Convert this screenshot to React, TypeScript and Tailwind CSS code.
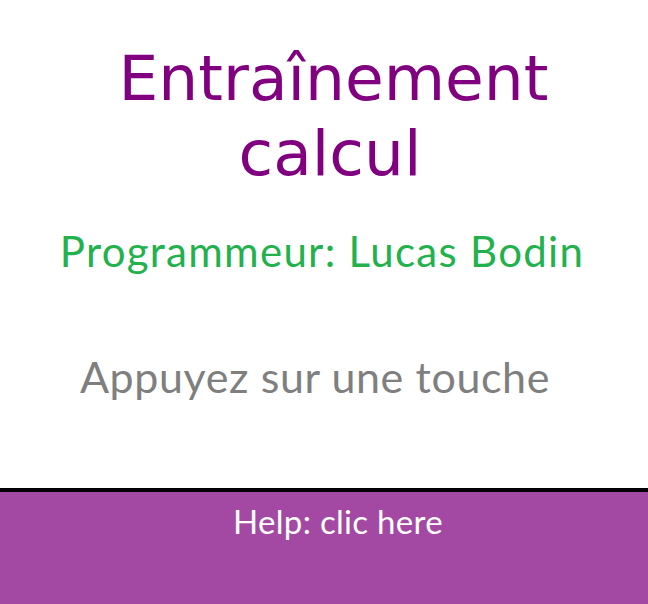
import React from "react";

export default function App() {
  return (
    <div className="w-[648px] h-[604px] bg-white flex flex-col overflow-hidden">
      <div className="pt-[41px] pl-[19px] text-center font-['DejaVu_Sans',sans-serif] text-[63px] leading-[75px] text-[#800080]">
        <div>Entraînement</div>
        <div className="pr-[7px]">calcul</div>
      </div>
      <div className="mt-[39px] pr-[4px] text-center font-['Lato',sans-serif] text-[42px] tracking-[1.3px] leading-none text-[#22B14C]">
        Programmeur: Lucas Bodin
      </div>
      <div className="mt-[83px] pr-[18px] text-center font-['Lato',sans-serif] text-[43px] tracking-[0.6px] leading-none text-[#7F7F7F]">
        Appuyez sur une touche
      </div>
      <div className="mt-auto h-[116px] border-t-4 border-black bg-[#A349A4] flex flex-col">
        <div className="pt-[13px] pl-[28px] text-center font-['Lato',sans-serif] text-[33px] tracking-[0.3px] leading-none text-white">
          Help: clic here
        </div>
      </div>
    </div>
  );
}
